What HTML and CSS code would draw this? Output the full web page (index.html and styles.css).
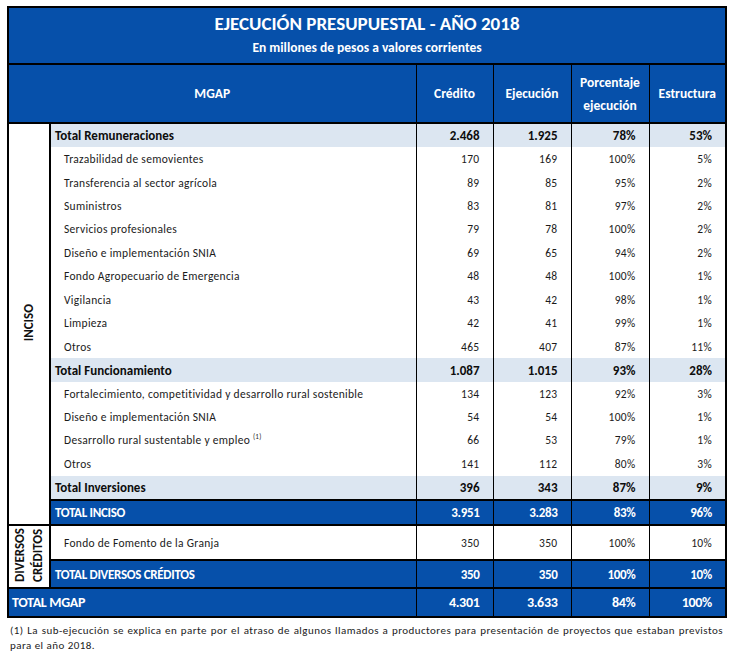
FILE: index.html
```html
<!DOCTYPE html>
<html lang="es">
<head>
<meta charset="utf-8">
<title>Ejecución presupuestal 2018</title>
<link rel="stylesheet" href="styles.css">
</head>
<body>
<table class="budget">
  <colgroup>
    <col class="c-side"><col class="c-label"><col class="c-num"><col class="c-num2"><col class="c-num2"><col class="c-num">
  </colgroup>
  <thead>
    <tr class="title-row">
      <th colspan="6">
        <div class="title">EJECUCIÓN PRESUPUESTAL - AÑO 2018</div>
        <div class="subtitle">En millones de pesos a valores corrientes</div>
      </th>
    </tr>
    <tr class="head-row">
      <th colspan="2" class="h-mgap">MGAP</th>
      <th class="h-num">Crédito</th>
      <th class="h-num">Ejecución</th>
      <th class="h-num">Porcentaje<br>ejecución</th>
      <th class="h-num">Estructura</th>
    </tr>
  </thead>
  <tbody>
    <tr class="sub">
      <td rowspan="17" class="side"><span class="vlabel">INCISO</span></td>
      <td class="lbl">Total Remuneraciones</td><td>2.468</td><td>1.925</td><td>78%</td><td>53%</td>
    </tr>
    <tr class="item"><td class="lbl">Trazabilidad de semovientes</td><td>170</td><td>169</td><td>100%</td><td>5%</td></tr>
    <tr class="item"><td class="lbl">Transferencia al sector agrícola</td><td>89</td><td>85</td><td>95%</td><td>2%</td></tr>
    <tr class="item"><td class="lbl">Suministros</td><td>83</td><td>81</td><td>97%</td><td>2%</td></tr>
    <tr class="item"><td class="lbl">Servicios profesionales</td><td>79</td><td>78</td><td>100%</td><td>2%</td></tr>
    <tr class="item"><td class="lbl">Diseño e implementación SNIA</td><td>69</td><td>65</td><td>94%</td><td>2%</td></tr>
    <tr class="item"><td class="lbl">Fondo Agropecuario de Emergencia</td><td>48</td><td>48</td><td>100%</td><td>1%</td></tr>
    <tr class="item"><td class="lbl">Vigilancia</td><td>43</td><td>42</td><td>98%</td><td>1%</td></tr>
    <tr class="item"><td class="lbl">Limpieza</td><td>42</td><td>41</td><td>99%</td><td>1%</td></tr>
    <tr class="item"><td class="lbl">Otros</td><td>465</td><td>407</td><td>87%</td><td>11%</td></tr>
    <tr class="sub"><td class="lbl">Total Funcionamiento</td><td>1.087</td><td>1.015</td><td>93%</td><td>28%</td></tr>
    <tr class="item"><td class="lbl">Fortalecimiento, competitividad y desarrollo rural sostenible</td><td>134</td><td>123</td><td>92%</td><td>3%</td></tr>
    <tr class="item"><td class="lbl">Diseño e implementación SNIA</td><td>54</td><td>54</td><td>100%</td><td>1%</td></tr>
    <tr class="item"><td class="lbl">Desarrollo rural sustentable y empleo <sup>(1)</sup></td><td>66</td><td>53</td><td>79%</td><td>1%</td></tr>
    <tr class="item"><td class="lbl">Otros</td><td>141</td><td>112</td><td>80%</td><td>3%</td></tr>
    <tr class="sub"><td class="lbl">Total Inversiones</td><td>396</td><td>343</td><td>87%</td><td>9%</td></tr>
    <tr class="total inciso"><td class="lbl">TOTAL INCISO</td><td>3.951</td><td>3.283</td><td>83%</td><td>96%</td></tr>
    <tr class="item single">
      <td rowspan="2" class="side side2"><span class="vlabel small">DIVERSOS<br>CRÉDITOS</span></td>
      <td class="lbl">Fondo de Fomento de la Granja</td><td>350</td><td>350</td><td>100%</td><td>10%</td>
    </tr>
    <tr class="total"><td class="lbl">TOTAL DIVERSOS CRÉDITOS</td><td>350</td><td>350</td><td>100%</td><td>10%</td></tr>
    <tr class="total grand"><td colspan="2" class="lbl">TOTAL MGAP</td><td>4.301</td><td>3.633</td><td>84%</td><td>100%</td></tr>
  </tbody>
</table>
<p class="note">(1) La sub-ejecución se explica en parte por el atraso de algunos llamados a productores para presentación de proyectos que estaban previstos para el año 2018.</p>
</body>
</html>
```

FILE: styles.css
```css
html, body {
  margin: 0;
  padding: 0;
  background: #ffffff;
}
body {
  padding: 6px 0 0 7px;
  font-family: Carlito, Lato, "Liberation Sans", sans-serif;
  color: #1b1b1b;
}
.budget {
  border-collapse: collapse;
  table-layout: fixed;
  width: 719px;
  border: 2px solid #000;
}
.c-side { width: 42px; }
.c-label { width: 366px; }
.c-num { width: 77px; }
.c-num2 { width: 78px; }

.budget th {
  background: #0650aa;
  color: #fff;
  font-weight: 700;
  border: 2px solid #000;
  padding: 0;
}
.title-row th {
  height: 55px;
  text-align: center;
  vertical-align: top;
}
.title {
  font-size: 19px;
  line-height: 22px;
  margin-top: 5px;
}
.subtitle {
  font-size: 13.5px;
  line-height: 18px;
  margin-top: 4px;
}
.head-row th {
  height: 57px;
  font-size: 13.5px;
  line-height: 23px;
  text-align: center;
  border-right: 1px solid #000;
  border-left: 1px solid #000;
}
.head-row th.h-mgap { border-left: 2px solid #000; }
.head-row th:last-child { border-right: 2px solid #000; }

.budget td {
  padding: 0 13px 0 0;
  text-align: right;
  font-size: 11.5px;
  letter-spacing: 0.3px;
  border-left: 1px solid #000;
  border-right: 1px solid #000;
  white-space: nowrap;
}
.budget td.lbl {
  text-align: left;
  padding: 0 0 0 13px;
  border-left: 2px solid #000;
}
.budget tr.item td,
.budget tr.sub td { height: 23.45px; }
.budget tr.sub td {
  background: #dce6f1;
  font-weight: 700;
  font-size: 13px;
  letter-spacing: 0;
  color: #0d0d0d;
}
.budget tr.sub td.lbl { padding-left: 4px; }
.budget tr.sub td.side { background: #fff; }

.budget td.side {
  background: #fff;
  border: 2px solid #000;
  padding: 0;
  text-align: center;
  vertical-align: middle;
}
.vlabel {
  display: inline-block;
  writing-mode: vertical-rl;
  transform: rotate(180deg);
  font-weight: 700;
  font-size: 13px;
  letter-spacing: 0;
  line-height: 18px;
  color: #111;
  text-align: center;
}
.vlabel.small { font-size: 13px; line-height: 18px; }

.budget tr.total td {
  background: #0650aa;
  color: #fff;
  font-weight: 700;
  font-size: 13px;
  letter-spacing: -0.3px;
  height: 26px;
  border-top: 2px solid #000;
  border-bottom: 2px solid #000;
}
.budget tr.inciso td { height: 23px; }
.budget tr.total td.lbl { padding-left: 4px; }
.budget tr.grand td.lbl { padding-left: 3px; font-size: 14px; }
.budget tr.grand td { height: 27px; font-size: 14px; }
.budget tr.single td { height: 33px; }

sup {
  font-size: 7px;
  vertical-align: 5px;
  line-height: 0;
}

.note {
  margin: 5px 0 0 3px;
  width: 713px;
  font-size: 11px;
  line-height: 15px;
  letter-spacing: 0.45px;
  text-align: justify;
  color: #1b1b1b;
}
```
